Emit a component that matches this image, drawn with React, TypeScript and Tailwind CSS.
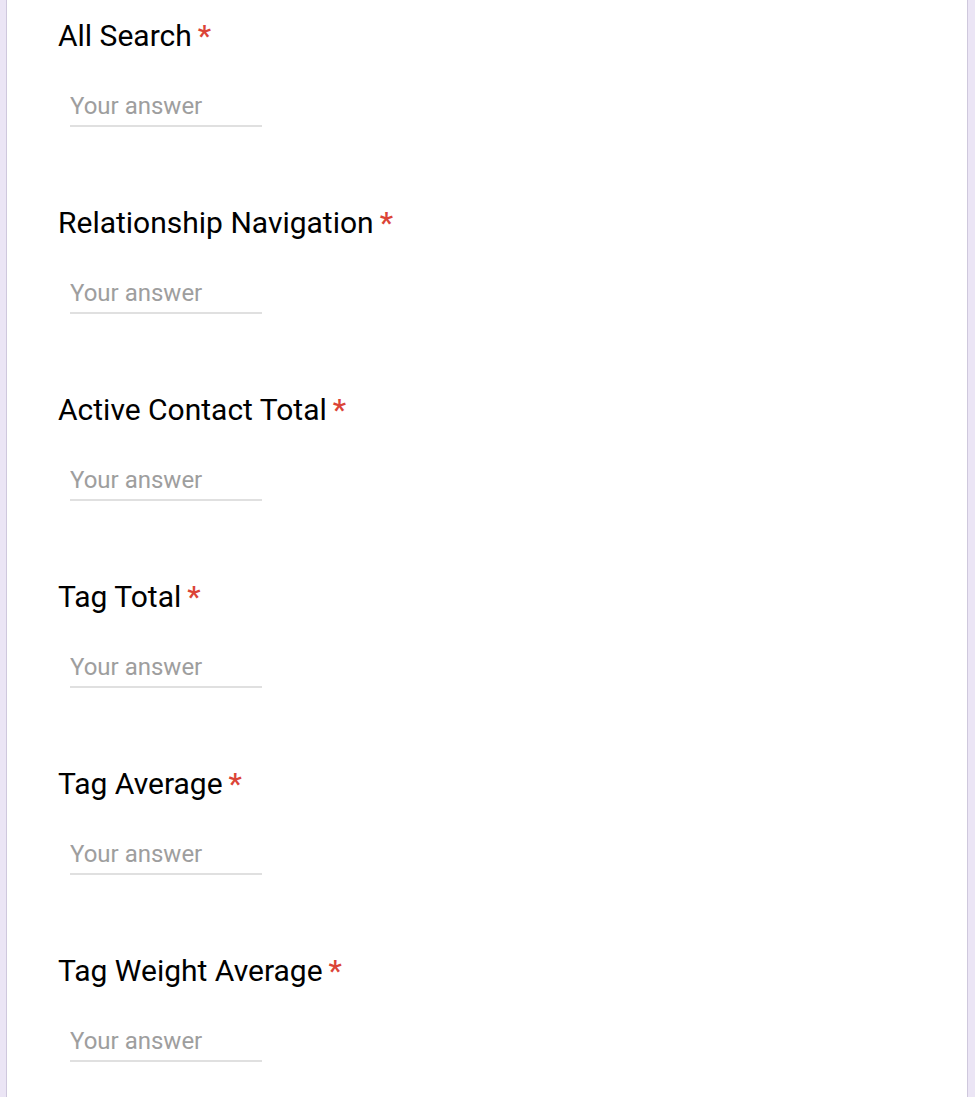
import React from "react";

const questions = [
  "All Search",
  "Relationship Navigation",
  "Active Contact Total",
  "Tag Total",
  "Tag Average",
  "Tag Weight Average",
];

const App = () => {
  return (
    <div className="flex h-[1097px] overflow-hidden bg-[#ebe5f5] pl-[6px] pr-[7px]">
      <div className="flex-1 border-x border-[#cfc8dd] bg-white pl-[51px] pt-[18px] font-['Roboto',sans-serif]">
        <div className="flex flex-col gap-[78px]">
          {questions.map((q) => (
            <div key={q}>
              <div className="h-[36px] text-[30px] leading-[36px] text-black">
                {q}
                <span className="ml-[6px] font-medium text-[#db4437]">*</span>
              </div>
              <div className="ml-[12px] mt-[37px] w-[192px]">
                <input
                  type="text"
                  placeholder="Your answer"
                  className="block w-full border-b-2 border-[#e0e0e0] bg-transparent pb-[3px] text-[24px] leading-[31px] outline-none placeholder:text-[#9e9e9e]"
                />
              </div>
            </div>
          ))}
        </div>
      </div>
    </div>
  );
};

export default App;
